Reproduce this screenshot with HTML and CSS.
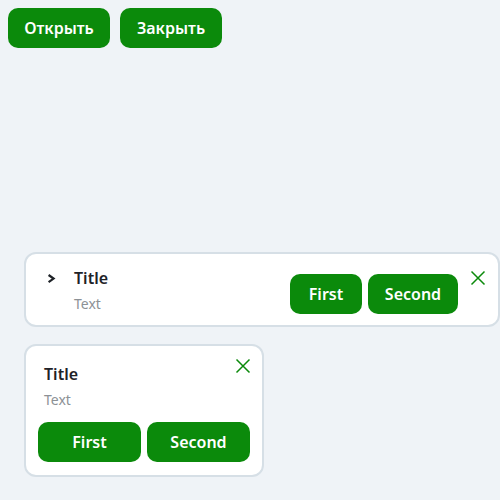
FILE: index.html
```html
<!DOCTYPE html>
<html lang="ru">
<head>
<meta charset="utf-8">
<title>Banners</title>
<link rel="stylesheet" href="styles.css">
</head>
<body>
<div class="page">
  <div class="toolbar">
    <button class="btn">Открыть</button>
    <button class="btn">Закрыть</button>
  </div>

  <div class="card card-wide">
    <div class="chevron">
      <svg width="16" height="16" viewBox="0 0 16 16"><path d="M4.6 4 L9.6 7.6 L4.6 11.2" fill="none" stroke="#1e2227" stroke-width="2.2"/></svg>
    </div>
    <div class="texts">
      <div class="title">Title</div>
      <div class="text">Text</div>
    </div>
    <div class="actions actions-wide">
      <button class="btn btn-first">First</button>
      <button class="btn btn-second">Second</button>
    </div>
    <svg class="close close-wide" width="16" height="16" viewBox="0 0 16 16"><path d="M1.5 1.5 L14.5 14.5 M14.5 1.5 L1.5 14.5" stroke="#0b8a0b" stroke-width="1.5"/></svg>
  </div>

  <div class="card card-narrow">
    <div class="texts texts-narrow">
      <div class="title">Title</div>
      <div class="text">Text</div>
    </div>
    <div class="actions actions-narrow">
      <button class="btn">First</button>
      <button class="btn">Second</button>
    </div>
    <svg class="close close-narrow" width="16" height="16" viewBox="0 0 16 16"><path d="M1.5 1.5 L14.5 14.5 M14.5 1.5 L1.5 14.5" stroke="#0b8a0b" stroke-width="1.5"/></svg>
  </div>
</div>
</body>
</html>
```

FILE: styles.css
```css
html, body {
  margin: 0;
  padding: 0;
  background: #eff3f7;
  font-family: "Noto Sans", "Open Sans", sans-serif;
}

.page {
  padding: 8px 0 0 0;
  width: 500px;
  overflow: hidden;
}

.toolbar {
  display: flex;
  gap: 10px;
  padding-left: 8px;
}

.btn {
  height: 40px;
  border: none;
  border-radius: 10px;
  background: #0b8a0b;
  color: #ffffff;
  font-family: inherit;
  font-size: 16px;
  font-weight: 600;
  padding: 0 16px;
  line-height: 40px;
  cursor: pointer;
  width: 102px;
}

.card {
  position: relative;
  box-sizing: border-box;
  background: #ffffff;
  border: 2px solid #d6dfe6;
  border-radius: 12px;
  margin-left: 24px;
}

.card-wide {
  margin-top: 204px;
  width: 476px;
  height: 75px;
  display: flex;
  align-items: flex-start;
  padding: 14px 40px 13px 18px;
}

.chevron {
  width: 16px;
  height: 20px;
  display: flex;
  align-items: center;
  margin-top: 1px;
}

.texts {
  display: flex;
  flex-direction: column;
  gap: 6px;
  margin-left: 14px;
  flex: 1;
}

.title {
  font-size: 16px;
  font-weight: 600;
  line-height: 20px;
  color: #1e2227;
}

.text {
  font-size: 14px;
  line-height: 20px;
  color: #8c9196;
}

.actions {
  display: flex;
  gap: 6px;
}

.actions-wide {
  margin-top: 6px;
}

.actions-wide .btn {
  width: auto;
}

.btn-first {
  width: 72px !important;
}

.btn-second {
  width: 90px !important;
}

.close {
  position: absolute;
}

.close-wide {
  top: 16px;
  right: 12px;
}

.card-narrow {
  margin-top: 17px;
  width: 240px;
  padding: 18px 12px 13px 12px;
}

.texts-narrow {
  margin-left: 6px;
  gap: 6px;
}

.actions-narrow {
  margin-top: 12px;
}

.actions-narrow .btn {
  flex: 1;
  width: auto;
}

.close-narrow {
  top: 12px;
  right: 11px;
}
```
